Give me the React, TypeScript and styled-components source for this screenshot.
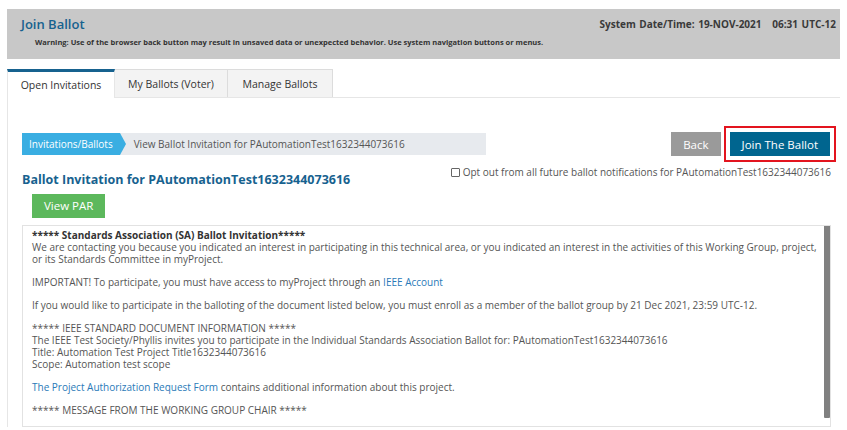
import { FC } from "react";
import styled, { createGlobalStyle } from "styled-components";

const GlobalStyle = createGlobalStyle`
  html, body {
    margin: 0;
    padding: 0;
    background: #ffffff;
    overflow: hidden;
  }
  body {
    font-family: "Open Sans", "Noto Sans", sans-serif;
    color: #555555;
  }
`;

const Page = styled.div`
  padding: 9px 7px 0 7px;
`;

const Header = styled.header`
  background-color: #c8c8c8;
  height: 50px;
  box-sizing: border-box;
  padding: 6px 4px 0 14px;
`;

const HeaderRow = styled.div`
  display: flex;
  justify-content: space-between;
  align-items: center;
`;

const Title = styled.h1`
  margin: 0;
  font-size: 13px;
  font-weight: 600;
  color: #17628f;
  line-height: 18px;
`;

const SystemTime = styled.div`
  font-size: 10px;
  font-weight: 700;
  color: #3a3a3a;
  word-spacing: 1px;
`;

const Warning = styled.div`
  margin: 4px 0 0 14px;
  font-size: 7.5px;
  font-weight: 700;
  color: #333333;
`;

const TabBar = styled.nav`
  display: flex;
  margin-top: 10px;
  border-bottom: 1px solid #e6e6e6;
`;

const Tab = styled.div<{ $active?: boolean; $width: number }>`
  box-sizing: border-box;
  width: ${(p) => p.$width}px;
  height: ${(p) => (p.$active ? "29px" : "28px")};
  display: flex;
  align-items: center;
  justify-content: center;
  font-size: 10.5px;
  color: #333333;
  background-color: ${(p) => (p.$active ? "#ffffff" : "#f3f3f3")};
  border: 1px solid ${(p) => (p.$active ? "#e6e6e6" : "#dcdcdc")};
  border-top: ${(p) => (p.$active ? "3px solid #17628f" : "1px solid #dcdcdc")};
  border-bottom: none;
  margin-bottom: ${(p) => (p.$active ? "-1px" : "0")};
  & + & {
    border-left: none;
  }
`;

const Panel = styled.section`
  border-left: 1px solid #e6e6e6;
  padding: 34px 9px 0 14px;
`;

const TopRow = styled.div`
  display: flex;
  align-items: center;
`;

const Breadcrumb = styled.div`
  display: flex;
  align-items: center;
  width: 464px;
  height: 22px;
  background-color: #e7eaee;
  font-size: 10px;
`;

const Crumb = styled.div`
  position: relative;
  height: 22px;
  display: flex;
  align-items: center;
  padding: 0 7px 0 7px;
  background-color: #3aaee2;
  color: #ffffff;
  &::after {
    content: "";
    position: absolute;
    right: -6px;
    top: 0;
    border-top: 11px solid transparent;
    border-bottom: 11px solid transparent;
    border-left: 6px solid #3aaee2;
  }
`;

const CrumbCurrent = styled.div`
  padding-left: 14px;
  color: #555555;
`;

const Actions = styled.div`
  margin-left: auto;
  display: flex;
  gap: 9px;
  padding-right: 1px;
`;

const Button = styled.button<{ $variant: "back" | "primary" | "success" }>`
  height: 24px;
  border: none;
  border-radius: 0;
  padding: 0 12px;
  font-family: "Open Sans", "Noto Sans", sans-serif;
  font-size: 11.5px;
  color: #ffffff;
  cursor: pointer;
  background-color: ${(p) =>
    p.$variant === "back"
      ? "#9a9a9a"
      : p.$variant === "primary"
      ? "#00658f"
      : "#5cb85c"};
  ${(p) =>
    p.$variant === "primary" &&
    `outline: 2px solid #e3141e; outline-offset: 4px;`}
`;

const InfoRow = styled.div`
  display: flex;
  justify-content: space-between;
  align-items: flex-start;
  margin-top: 9px;
`;

const Heading = styled.h2`
  margin: 6px 0 0 0;
  font-size: 12.5px;
  font-weight: 700;
  color: #17628f;
`;

const OptOut = styled.label`
  display: flex;
  align-items: center;
  gap: 3px;
  font-size: 10px;
  color: #555555;
`;

const Check = styled.span`
  width: 7px;
  height: 7px;
  border: 1px solid #666666;
  border-radius: 1px;
  background: #ffffff;
`;

const ParWrap = styled.div`
  padding-left: 10px;
  margin-top: 5px;
`;

const MessageBox = styled.div`
  margin-top: 7px;
  border: 1px solid #e2e2e2;
  height: 202px;
  box-sizing: border-box;
  display: flex;
  overflow: hidden;
`;

const MessageBody = styled.div`
  flex: 1;
  overflow: hidden;
  padding: 3px 0 0 9px;
  font-size: 10px;
  line-height: 12px;
  color: #555555;
`;

const ScrollRail = styled.div`
  width: 6px;
`;

const ScrollThumb = styled.div`
  height: 192px;
  background: #808080;
  border-radius: 0 0 1px 1px;
`;

const Para = styled.p`
  margin: 0 0 11px 0;
`;

const Strong = styled.span`
  font-weight: 700;
  color: #333333;
`;

const Link = styled.a`
  color: #2a7ab8;
  text-decoration: none;
`;

const App: FC = () => (
  <Page>
    <GlobalStyle />
    <Header>
      <HeaderRow>
        <Title>Join Ballot</Title>
        <SystemTime>System Date/Time: 19-NOV-2021&nbsp;&nbsp; 06:31 UTC-12</SystemTime>
      </HeaderRow>
      <Warning>
        Warning: Use of the browser back button may result in unsaved data or
        unexpected behavior. Use system navigation buttons or menus.
      </Warning>
    </Header>

    <TabBar>
      <Tab $active $width={108}>Open Invitations</Tab>
      <Tab $width={113}>My Ballots (Voter)</Tab>
      <Tab $width={105}>Manage Ballots</Tab>
    </TabBar>

    <Panel>
      <TopRow>
        <Breadcrumb>
          <Crumb>Invitations/Ballots</Crumb>
          <CrumbCurrent>View Ballot Invitation for PAutomationTest1632344073616</CrumbCurrent>
        </Breadcrumb>
        <Actions>
          <Button $variant="back">Back</Button>
          <Button $variant="primary">Join The Ballot</Button>
        </Actions>
      </TopRow>

      <InfoRow>
        <Heading>Ballot Invitation for PAutomationTest1632344073616</Heading>
        <OptOut>
          <Check />
          Opt out from all future ballot notifications for PAutomationTest1632344073616
        </OptOut>
      </InfoRow>

      <ParWrap>
        <Button $variant="success">View PAR</Button>
      </ParWrap>

      <MessageBox>
        <MessageBody>
          <Para>
            <Strong>***** Standards Association (SA) Ballot Invitation*****</Strong>
            <br />
            We are contacting you because you indicated an interest in participating
            in this technical area, or you indicated an interest in the activities of
            this Working Group, project, or its Standards Committee in myProject.
          </Para>
          <Para>
            IMPORTANT! To participate, you must have access to myProject through an{" "}
            <Link>IEEE Account</Link>
          </Para>
          <Para>
            If you would like to participate in the balloting of the document listed
            below, you must enroll as a member of the ballot group by 21 Dec 2021,
            23:59 UTC-12.
          </Para>
          <Para>
            ***** IEEE STANDARD DOCUMENT INFORMATION *****
            <br />
            The IEEE Test Society/Phyllis invites you to participate in the Individual
            Standards Association Ballot for: PAutomationTest1632344073616
            <br />
            Title: Automation Test Project Title1632344073616
            <br />
            Scope: Automation test scope
          </Para>
          <Para>
            <Link>The Project Authorization Request Form</Link> contains additional
            information about this project.
          </Para>
          <Para>***** MESSAGE FROM THE WORKING GROUP CHAIR *****</Para>
        </MessageBody>
        <ScrollRail>
          <ScrollThumb />
        </ScrollRail>
      </MessageBox>
    </Panel>
  </Page>
);

export default App;
